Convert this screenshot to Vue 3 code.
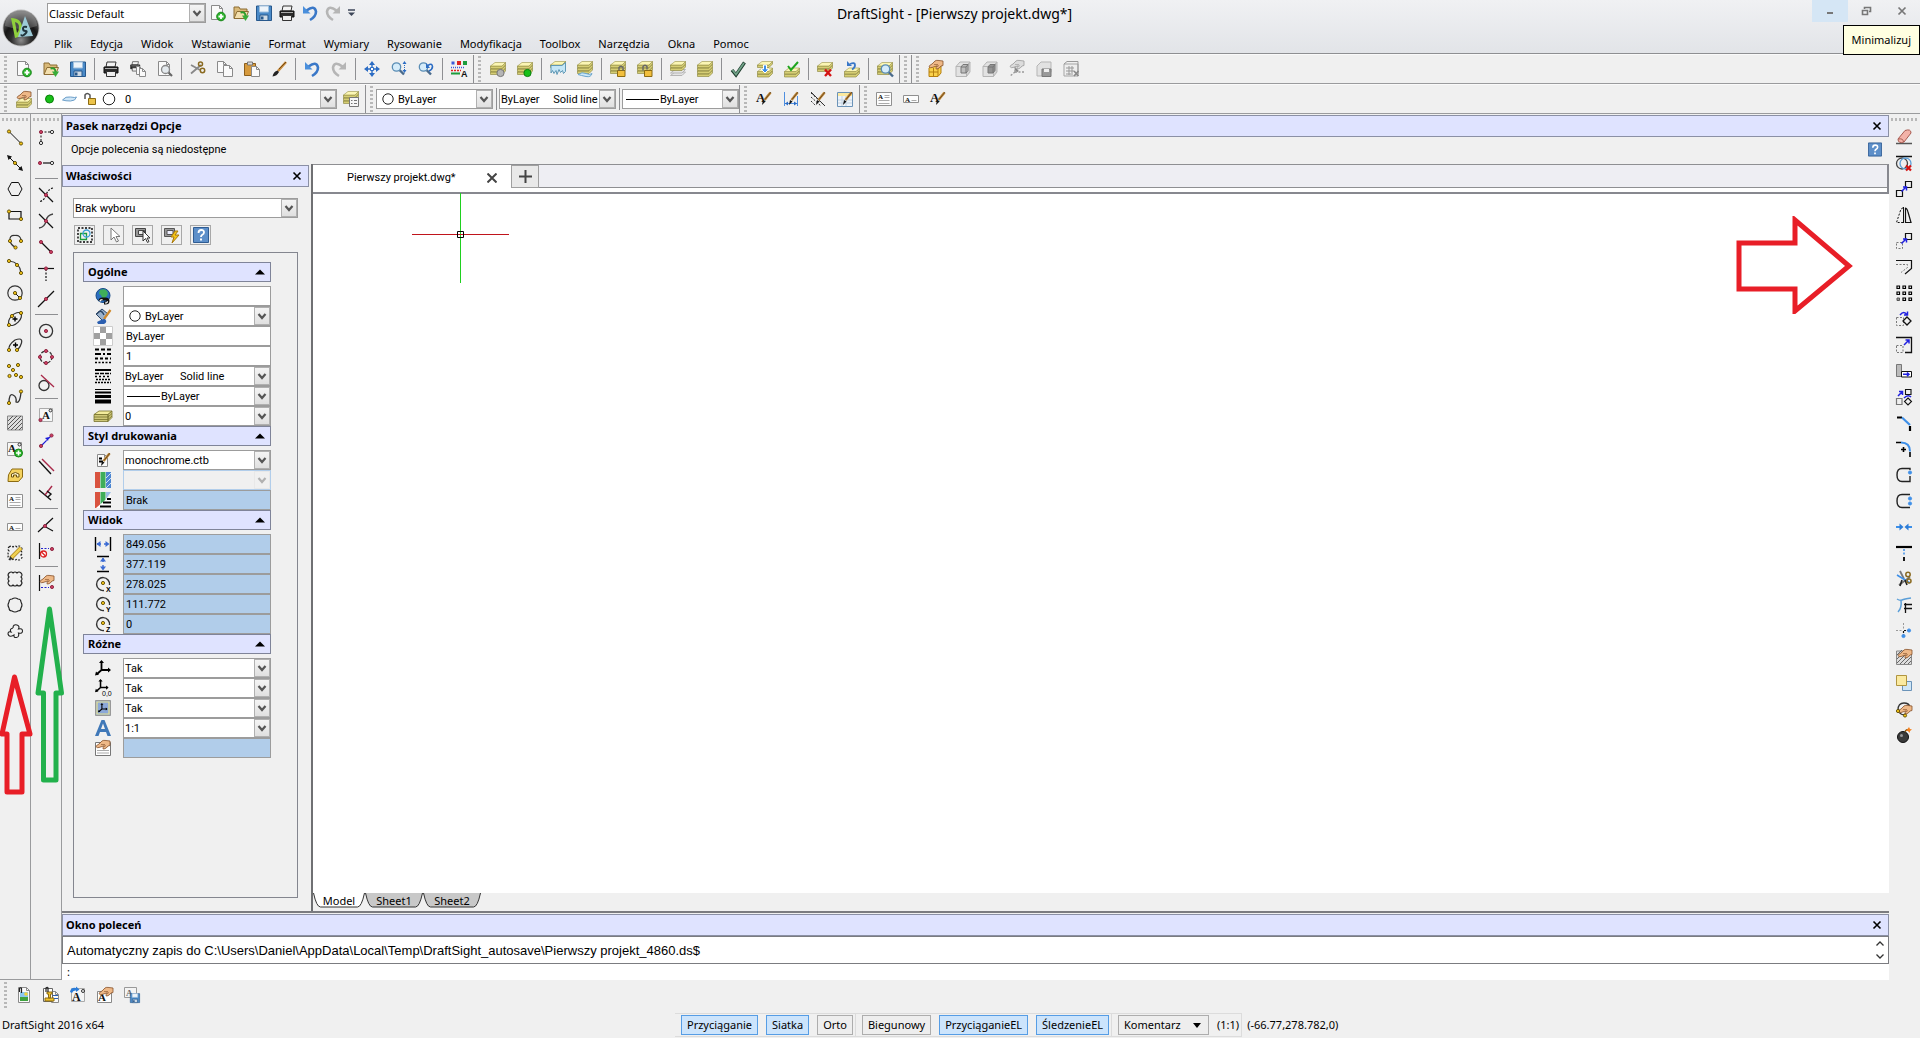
<template>
  <div class="app">
    <!-- title and menu -->
    <header class="top">
      <a class="logo" href="#" aria-label="DraftSight">
        <svg viewBox="0 0 40 40" width="40" height="40">
          <defs>
            <radialGradient id="ball" cx="50%" cy="85%" r="80%">
              <stop offset="0" stop-color="#8d8d8d" />
              <stop offset=".35" stop-color="#2d2d2d" />
              <stop offset=".6" stop-color="#161616" />
              <stop offset="1" stop-color="#777" />
            </radialGradient>
          </defs>
          <circle cx="20" cy="20" r="18.5" fill="#bbb" />
          <circle cx="20" cy="20" r="17.6" fill="url(#ball)" />
          <path d="M4 18a16 16 0 0 1 32 0q-16 6-32 0z" fill="#aaa" opacity=".35" />
          <path d="M10 10q11 0 11 10 0 9-7 10zm4 4 2 11q2-2 2-6t-4-5z" fill="#8fd03c" fill-rule="evenodd" />
          <path d="M24 8l8 20-15 1z" fill="#9ccbd8" />
          <path d="M26 19q-4-1-4 1.5t2.5 2.5-.5 3-4 .5" fill="none" stroke="#20343c" stroke-width="2" />
        </svg>
      </a>
      <div class="top-rows">
        <div class="title-row">
          <div class="combo workspace-combo">
            <select aria-label="Workspace"><option>Classic Default</option></select>
            <span class="drop"><svg viewBox="0 0 10 10" v-html="chevron"></svg></span>
          </div>
          <div class="quick">
            <button v-for="name in quick" :key="name" class="quick-btn" :aria-label="name">
              <svg class="icon" viewBox="0 0 16 16" v-html="icons[name]"></svg>
            </button>
            <button class="more" aria-label="more">
              <svg viewBox="0 0 7 8" width="7" height="8"><path d="M0 1h7" stroke="#3d4658" stroke-width="1.5" /><path d="M0 3.5h7L3.5 7z" fill="#3d4658" /></svg>
            </button>
          </div>
          <h1 class="title">DraftSight - [Pierwszy projekt.dwg*]</h1>
          <div class="window-buttons">
            <button class="hot" aria-label="Minimalizuj"><svg viewBox="0 0 12 12"><path d="M3 8h6" stroke="#777" stroke-width="2" /></svg></button>
            <button aria-label="restore"><svg viewBox="0 0 12 12"><path d="M4.5 4V2.5h6v4H9M2.5 5.5h5v4h-5z" fill="none" stroke="#777" stroke-width="1.6" /></svg></button>
            <button aria-label="close"><svg viewBox="0 0 12 12"><path d="M2.5 2.5l7 7m0-7l-7 7" stroke="#777" stroke-width="1.7" /></svg></button>
            <div class="tooltip">Minimalizuj</div>
          </div>
        </div>
        <nav class="menu">
          <a v-for="item in menu" :key="item" href="#">{{ item }}</a>
        </nav>
      </div>
    </header>

    <!-- standard, layer and view toolbars -->
    <div class="toolbar">
      <div v-for="(group, g) in toolGroups" :key="g" class="tool-group">
        <span class="grip"></span>
        <template v-for="(name, i) in group" :key="i">
          <span v-if="name === '|'" class="sep"></span>
          <button v-else class="tool" :aria-label="name">
            <svg class="icon" viewBox="0 0 16 16" v-html="icons[name]"></svg>
          </button>
        </template>
      </div>
    </div>

    <!-- layer and line properties -->
    <div class="toolbar">
      <div class="tool-group">
        <span class="grip"></span>
        <button class="tool" aria-label="layers"><svg class="icon" viewBox="0 0 16 16" v-html="icons.layerHand"></svg></button>
        <div class="combo layer-combo">
          <svg class="layer-state" viewBox="0 0 66 16" v-html="icons.layerState"></svg>
          <select aria-label="Layer"><option>0</option></select>
          <span class="drop"><svg viewBox="0 0 10 10" v-html="chevron"></svg></span>
        </div>
        <button class="tool" aria-label="layer states"><svg class="icon" viewBox="0 0 16 16" v-html="icons.layerList"></svg></button>
      </div>
      <div class="tool-group line-group">
        <span class="grip"></span>
        <div class="combo line-combo">
          <svg class="lead" viewBox="0 0 16 16"><circle cx="8" cy="8" r="5.2" fill="#fff" stroke="#222" /></svg>
          <select aria-label="Line colour"><option>ByLayer</option></select>
          <span class="drop"><svg viewBox="0 0 10 10" v-html="chevron"></svg></span>
        </div>
        <span class="sep"></span>
        <div class="combo line-combo">
          <select aria-label="Line style"><option>ByLayer &nbsp;&nbsp;&nbsp; Solid line</option></select>
          <span class="drop"><svg viewBox="0 0 10 10" v-html="chevron"></svg></span>
        </div>
        <span class="sep"></span>
        <div class="combo line-combo">
          <svg class="lead-line" viewBox="0 0 34 16"><path d="M1 8.5h33" stroke="#000" /></svg>
          <select aria-label="Line weight"><option>ByLayer</option></select>
          <span class="drop"><svg viewBox="0 0 10 10" v-html="chevron"></svg></span>
        </div>
      </div>
      <div v-for="(group, g) in styleGroups" :key="g" class="tool-group">
        <span class="grip"></span>
        <button v-for="name in group" :key="name" class="tool" :aria-label="name">
          <svg class="icon" viewBox="0 0 16 16" v-html="icons[name]"></svg>
        </button>
      </div>
    </div>

    <div class="workspace">
      <div v-for="(column, c) in leftColumns" :key="c" class="side">
        <span class="side-grip"></span>
        <template v-for="(name, i) in column" :key="i">
          <span v-if="name === '|'" class="side-sep"></span>
          <button v-else class="side-tool" :aria-label="name">
            <svg class="icon" viewBox="0 0 16 16" v-html="icons[name]"></svg>
          </button>
        </template>
      </div>

      <main class="center">
        <section class="options">
          <div class="panel-head">
            <h2>Pasek narzędzi Opcje</h2>
            <button class="close" aria-label="close"><svg viewBox="0 0 10 10" v-html="cross"></svg></button>
          </div>
          <div class="options-body">
            <span>Opcje polecenia są niedostępne</span>
            <button class="help" aria-label="help"><svg viewBox="0 0 16 16" v-html="icons.help"></svg></button>
          </div>
        </section>

        <div class="middle">
          <aside class="properties">
            <div class="panel-head">
              <h2>Właściwości</h2>
              <button class="close" aria-label="close"><svg viewBox="0 0 10 10" v-html="cross"></svg></button>
            </div>
            <div class="properties-body">
              <div class="combo">
                <select aria-label="Selection"><option>Brak wyboru</option></select>
                <span class="drop"><svg viewBox="0 0 10 10" v-html="chevron"></svg></span>
              </div>
              <div class="pickers">
                <button v-for="name in pickers" :key="name" :aria-label="name">
                  <svg class="icon" viewBox="0 0 16 16" v-html="icons[name]"></svg>
                </button>
              </div>
              <div class="sheet">
                <section v-for="section in sections" :key="section.title" class="group">
                  <button class="group-head">
                    <span>{{ section.title }}</span>
                    <svg viewBox="0 0 10 6" width="10" height="6"><path d="M0 5.5L5 .5l5 5z" fill="#000" /></svg>
                  </button>
                  <div class="rows">
                    <div v-for="row in section.rows" :key="row.icon" class="row">
                      <label :for="row.icon" :aria-label="row.icon">
                        <svg class="icon" viewBox="0 0 16 16" v-html="icons[row.icon]"></svg>
                      </label>
                      <div v-if="row.type === 'select'" class="combo" :class="{ off: row.off }">
                        <svg v-if="row.lead === 'circle'" class="lead" viewBox="0 0 16 16"><circle cx="8" cy="8" r="5.2" fill="#fff" stroke="#222" /></svg>
                        <svg v-if="row.lead === 'line'" class="lead-line" viewBox="0 0 34 16"><path d="M1 8.5h33" stroke="#000" /></svg>
                        <select :id="row.icon" :disabled="row.off"><option>{{ row.value }}</option></select>
                        <span class="drop"><svg viewBox="0 0 10 10" v-html="chevron"></svg></span>
                      </div>
                      <input v-else :id="row.icon" type="text" :value="row.value" :readonly="row.type === 'read'" />
                    </div>
                  </div>
                </section>
              </div>
            </div>
          </aside>

          <section class="document">
            <div class="doc-tabs">
              <div class="doc-tab">
                <span>Pierwszy projekt.dwg*</span>
                <button aria-label="close tab"><svg viewBox="0 0 10 10"><path d="M.5 .5l9 9m0-9l-9 9" stroke="#444" stroke-width="2" /></svg></button>
              </div>
              <button class="add-tab" aria-label="new tab"><svg viewBox="0 0 13 13"><path d="M0 6.5h13M6.5 0v13" stroke="#444" stroke-width="2" /></svg></button>
            </div>
            <div class="canvas">
              <svg class="cursor" viewBox="0 0 98 90" width="98" height="90">
                <path d="M48.5 0v90" stroke="#1fd01f" />
                <path d="M0 41.5h97" stroke="#c0141c" />
                <path d="M45.5 38.5h6v6h-6z" fill="none" stroke="#000" />
              </svg>
              <svg class="arrow-right" viewBox="0 0 118 98" width="118" height="98">
                <path d="M4 27h56V4l54 46-54 45V73H4z" fill="none" stroke="#e81e27" stroke-width="5" />
              </svg>
            </div>
            <div class="sheet-tabs">
              <button v-for="tab in sheetTabs" :key="tab.name">
                <svg :viewBox="`0 0 ${tab.width} 15`" :width="tab.width" height="15">
                  <path :d="`M.5 0q3 14 7 14h${tab.width - 15}q4 0 7-14`" :fill="tab.active ? '#fff' : '#c8c8c8'" stroke="#333" />
                </svg>
                <span>{{ tab.name }}</span>
              </button>
            </div>
          </section>
        </div>

        <section class="command">
          <div class="panel-head">
            <h2>Okno poleceń</h2>
            <button class="close" aria-label="close"><svg viewBox="0 0 10 10" v-html="cross"></svg></button>
          </div>
          <div class="history">
            <p>Automatyczny zapis do C:\Users\Daniel\AppData\Local\Temp\DraftSight_autosave\Pierwszy projekt_4860.ds$</p>
            <div class="spin">
              <button aria-label="up"><svg viewBox="0 0 8 5"><path d="M.5 4.5L4 1l3.5 3.5" fill="none" stroke="#333" stroke-width="1.3" /></svg></button>
              <button aria-label="down"><svg viewBox="0 0 8 5"><path d="M.5 .5L4 4 7.5 .5" fill="none" stroke="#333" stroke-width="1.3" /></svg></button>
            </div>
          </div>
          <input class="prompt" type="text" value=":" aria-label="Command" />
        </section>
      </main>

      <div class="side side-right">
        <span class="side-grip"></span>
        <button v-for="name in rightColumn" :key="name" class="side-tool" :aria-label="name">
          <svg class="icon" viewBox="0 0 16 16" v-html="icons[name]"></svg>
        </button>
      </div>

      <svg class="arrows-left" viewBox="0 0 66 190" width="66" height="190">
        <path d="M14.5 73L2 130h5v58h15v-58h8z" fill="none" stroke="#e81e27" stroke-width="5" stroke-linejoin="round" />
        <path d="M49.5 5L38 89h5.5v87H56V89h5.5z" fill="none" stroke="#22b14c" stroke-width="5" stroke-linejoin="round" />
      </svg>
    </div>

    <footer>
      <div class="bottom-tools">
        <span class="grip"></span>
        <button v-for="name in bottomTools" :key="name" class="tool" :aria-label="name">
          <svg class="icon" viewBox="0 0 16 16" v-html="icons[name]"></svg>
        </button>
      </div>
      <div class="status">
        <span class="version">DraftSight 2016 x64</span>
        <div class="modes">
          <div class="mode-group">
            <button class="on">Przyciąganie</button>
            <button class="on">Siatka</button>
            <button>Orto</button>
          </div>
          <div class="mode-group">
            <button>Biegunowy</button>
            <button class="on">PrzyciąganieEL</button>
            <button class="on">ŚledzenieEL</button>
          </div>
          <div class="mode-group">
            <button class="note">Komentarz <svg viewBox="0 0 8 5" width="8" height="5"><path d="M0 0h8L4 5z" fill="#000" /></svg></button>
            <span>(1:1)</span>
          </div>
          <span class="coords">(-66.77,278.782,0)</span>
        </div>
      </div>
    </footer>
  </div>
</template>

<script setup>
// drawing helpers
const ln = (d, c = '#111', w = 1, more = '') => `<path d="${d}" fill="none" stroke="${c}" stroke-width="${w}" ${more}/>`
const fl = (d, f, s = 'none', w = 1) => `<path d="${d}" fill="${f}" stroke="${s}" stroke-width="${w}"/>`
const dots = (pts, f = '#f5c518', s = '#5b4a00') => pts.map(([x, y]) => `<circle cx="${x}" cy="${y}" r="1.6" fill="${f}" stroke="${s}" stroke-width=".9"/>`).join('')
const red = (...pts) => dots(pts, '#cc3f62', '#8c2440')
const blue = (...pts) => dots(pts, '#3d8fe8', '#3d8fe8')
const dash = 'stroke-dasharray="2 1.5"'
const letter = (t, x, y, size, c = '#111', family = 'Liberation Serif') =>
  `<text x="${x}" y="${y}" font-size="${size}" font-weight="bold" font-family="${family}, serif" fill="${c}">${t}</text>`

// one slab: pale top face over a front edge
const slab = (y) => fl(`M.5 ${y + 4}h11.5l3.5-3.5v2.5l-3.5 3.500H.5z`, '#d6ce74', '#857f36', 0.6) + fl(`M.5 ${y + 4}l4.500-3.500h10.500l-3.500 3.500z`, '#fbf6b4', '#9a9448', 0.6)
const slabGrey = (y) => fl(`M.5 ${y + 4}l4.500-3.500h10.500l-3.500 3.500z`, '#e4e4e4', '#b5b5b5')
const stack = (n, y = 1) => Array.from({ length: n }, (_, i) => slab(y + (n - 1 - i) * 3)).join('')
const badge = (c, s) => `<circle cx="10.5" cy="12" r="3.6" fill="${c}" stroke="${s}"/>`
const lock = fl('M7.500 9.500h7.500v6h-7.500z', '#f2bf3d', '#8c6b12')
const page = (x, y, w = 8, h = 10) => fl(`M${x} ${y}h${w - 3}l3 3v${h - 3}h-${w}z`, '#fafafa', '#8a8a8a') + ln(`M${x + w - 3} ${y}v3h3`, '#8a8a8a')
const lens = (x, y) => ln(`M${x + 3} ${y + 3}l4.500 4.500`, '#4a6b8c', 2.4) + `<circle cx="${x}" cy="${y}" r="4.2" fill="#d5ecfa" stroke="#5a8db5" stroke-width="1.3"/>`
const hand = (x = 0, y = 0, f = '#eeb887', s = '#86502a') => `<g transform="translate(${x} ${y})">` +
  fl('M1 6.500Q1 5.500 4 4l3-3q1-.8 3-.6l5 .6v4.500l-2 .5q-1.500 2.500-4 3-1.500.2-1-1.200l1.200-2L4 7.500q-2 .8-3-1z', f, s, 0.8) + ln('M6 4.500h4M9 6.500l2-1', s, 0.6) + '</g>'
const brushAt = ln('M14.500 1.500L8.500 9', '#c08a3c', 2.6) + ln('M15 1L9 8.500', '#5b3a12', 0.8) + fl('M6 14l1-5 2.500 1.500z', '#111')
const note = fl('M.5 1.500h15v13H.5z', '#fdfdfd', '#909090') + letter('A', 2, 8, 7) + ln('M8.500 4.500h5M8.500 6.500h5M2.500 9.500h11M2.500 12.500h11', '#aaa')
const smallNote = fl('M.5 4.500h15v7H.5z', '#fdfdfd', '#909090') + letter('A', 2, 10.5, 7) + ln('M8.500 9.500h5', '#aaa')
const printer = fl('M4 1h9l-1 5H3z', '#f2f2f2', '#333') + fl('M1 6h14v6H1z', '#2a2a2a', '#111') + fl('M3.500 10.500h9v5h-9z', '#eee', '#333') + ln('M2 7.500h12', '#aaa')
const floppy = fl('M.5 1h15v14.500h-15z', '#4a8ac8', '#27588c') + fl('M3.500 1h9v6h-9z', '#eef4fa', '#9fc0de') + fl('M4 10h8v5.500H4z', '#cfdbe6', '#27588c') + fl('M5 11.500h2.500v3H5z', '#27588c')
const cube = (inner) => fl('M1 5.500l4-4.500h10l-3.500 4.500zM1 5.500h10.500v10H1z', '#e2e2e2', '#b5b5b5') + fl('M11.500 5.500L15 1v10l-3.500 4.500z', '#d2d2d2', '#b5b5b5') + fl('M6 6l2-2.500h5v6L11 12H6z', inner, '#777') + ln('M6 6h5v6M11 6l2-2.500', '#777')
const arrow = (d) => ln(d, '#2020e0', 1.5)
const stripes = (c) => ln('M1 6l5-5M1 10l9-9M1 14l13-13M4 15L15 4M8 15l7-7M12 15l3-3', c)
const axes = ln('M6.500 10V1.500M6.500 10H15M6.500 10L1.500 14.500', '#000', 1.8) + fl('M6.500 0l2.500 3H4zM16 10l-3 2.500v-5zM0 15.500l1-4 3 3z', '#000')
const centreOf = (t) => ln('M14.500 9A6.500 6.500 0 1 0 9 14.500', '#333', 1.4) + dots([[8, 7]]) + `<text x="11" y="16" font-size="7" font-weight="bold" font-family="Liberation Sans, sans-serif">${t}</text>`

const chevron = '<path d="M1.5 3l3.5 4 3.5-4" fill="none" stroke="#555" stroke-width="2.2"/>'
const cross = '<path d="M1.5 1.5l7 7m0-7l-7 7" fill="none" stroke="#000" stroke-width="1.6"/>'

const icons = {
  newDoc: page(1.5, 0.5, 11, 14) + '<circle cx="11" cy="11.5" r="4.3" fill="#2fb52f" stroke="#158515"/>' + ln('M11 9v5M8.500 11.500h5', '#fff', 1.8),
  open: fl('M1 13V2h5l1 2h7v3z', '#d9b978', '#8c6c33') + fl('M1 13.500L4 6.500h11.500l-3 7z', '#f3dfae', '#8c6c33') + ln('M7.500 7.500q5-1.500 5 4', '#2d9d2d', 2) + fl('M9 10.500h7L12.500 16z', '#39ad39'),
  save: floppy,
  print: printer,
  undo: ln('M4.500 5.500q8-6 9.500 1 0 5-6 8.500', '#3a78c8', 2.6) + fl('M1 1v7.500h7.500z', '#4a8fdc'),
  redo: ln('M11.500 5.500q-8-6-9.500 1 0 5 6 8.500', '#b5b5b5', 2.6) + fl('M15 1v7.500H7.500z', '#b5b5b5'),
  printMany: '<g transform="scale(.65)">' + printer + '</g>' + page(6.5, 5.5, 6, 8) + page(9.5, 7.5, 6, 8),
  preview: page(1.5, 0.5, 11, 14) + ln('M11 11l4 4', '#666', 2.2) + '<circle cx="8.5" cy="8.5" r="4" fill="#e4eaee" stroke="#888" stroke-width="1.3"/>',
  cut: ln('M1 4l9 5M1 12.500L11 4', '#888', 1.8) + '<circle cx="10.5" cy="3" r="2" fill="none" stroke="#8a6a20" stroke-width="1.5"/><circle cx="12.5" cy="9.5" r="2.2" fill="none" stroke="#8a6a20" stroke-width="1.5"/>',
  copy: page(0.5, 0.5, 9, 11) + page(6.5, 4.5, 9, 11),
  paste: fl('M.5 2.500h11v12H.5z', '#d69a3d', '#8c5f1c') + fl('M3.500 1h5v3h-5z', '#ddd', '#777') + page(7.5, 5.5, 8, 10),
  brush: ln('M15 1L7 10', '#c98b39', 2.6) + ln('M15 1L8 8', '#5b3a12', 0.8) + fl('M1.500 15.500q1-5 5-6l1.500 1.500q-2 4-6.500 4.500z', '#222'),
  pan: ln('M8 3v10M3 8h10', '#2b6cc4', 1.4, 'stroke-dasharray="3 4"') + fl('M8 0l3 4H5zM8 16l3-4H5zM0 8l4-3v6zM16 8l-4-3v6z', '#2b6cc4') + fl('M6.500 6.500h3v3h-3z', '#fff', '#2b6cc4'),
  zoomDyn: lens(5.5, 6) + ln('M13.500 2v8', '#2b6cc4', 1, 'stroke-dasharray="1 1"') + fl('M13.500 0l2 3h-4zM13.500 12l2-3h-4z', '#2b6cc4'),
  zoomPrev: lens(5.5, 6) + ln('M10 4.500q4-3 4.500 1 0 3-3.500 4.500', '#2b6cc4', 1.6) + fl('M8 2v5h4z', '#2b6cc4'),
  palette: fl('M.5 .5h3v3h-3z', '#3b59d9') + fl('M6 0h4v4H6z', '#d22') + fl('M12 0h4v4h-4z', '#1c9c3c') + ln('M0 6.500h14', '#3b59d9', 1.5, 'stroke-dasharray="1 1"') + ln('M0 9.500h10', '#d22', 1.5, 'stroke-dasharray="2 1"') + ln('M0 12.500h9', '#1c9c3c', 2) + letter('A', 10, 16, 9, '#111', 'Liberation Sans'),
  layerOff: stack(3, 1) + badge('#b5b5b5', '#777'),
  layerOn: stack(3, 1) + badge('#18c018', '#0b800b'),
  layerThaw: slab(0) + fl('M1 4.500h11l3.500-3v9l-2 2-1-3-2 2-1.500-3-2 5-1-4-2 3-1.500-3L1 12z', '#c4e6f6', '#5f98b5'),
  layerFreeze: stack(3, 0) + fl('M1 13.500q4-3 8-1t6 0q-1 4-6 3t-8-2z', '#c9e8fa', '#6ca6cc'),
  layerLock: stack(3, 0) + lock + ln('M9 9.500V6.500q2-2.500 4 0v3', '#666', 1.4),
  layerUnlock: stack(3, 0) + lock + ln('M6 9.500V5.500q2-2.500 4 0v3', '#666', 1.4),
  layerHide: slabGrey(10.5) + slabGrey(8) + stack(2, 0),
  layerShow: stack(2, 6) + stack(2, 0),
  check: ln('M2 9l4 5L14.500 1.500', '#1f3d2f', 3.4) + ln('M2.500 9l3.500 4.500L14 2', '#71a388', 1.8),
  layerMerge: stack(2, 6.5) + slab(0) + fl('M6.500 4h3v4h2.500L8 12 4 8h2.500z', '#3d8fe8', '#fff'),
  layerCheck: stack(2, 6.5) + ln('M4 5l3 4 7-8', '#1ea51e', 2),
  layerDelete: stack(2, 1) + ln('M8 8.500l6 6.500m0-6.500L8 15', '#d41414', 2.4),
  layerUndo: stack(2, 6.5) + ln('M6 3q5-2 5 1 0 3-3 4.500', '#3a78c8', 1.8) + fl('M3 0v5h5z', '#3a78c8'),
  layerZoom: stack(3, 1) + lens(8.5, 8),
  cubeHand: fl('M1 7l3-3h9v8l-3 3.500H1z', '#fad14a', '#b57f10') + ln('M1 11h9M5.500 7v8M10 7v8', '#b57f10') + hand(0, -1),
  cubeA: cube('#bdbdbd'),
  cubeB: cube('#939393'),
  axisGrey: ln('M6 11V4M6 11h9M6 11l-5 4', '#999', 1.4, dash) + hand(0, -1, '#dcdcdc', '#999') + ln('M6 7.500l3 3', '#888', 2),
  cubeSave: fl('M1 5l4-4h10v10l-3 4H1z', '#e2e2e2', '#b5b5b5') + fl('M6 8h9v7.500H6z', '#999', '#777') + fl('M8 8h5v3H8z', '#eee'),
  cubeX: fl('M1 3h14v12H1z', '#eee', '#a5a5a5') + ln('M3 7h8M3 10h8M3 13h5M6 5v9M9 5v9M1 3l3-2.500h11V13', '#999') + ln('M11 10l4.500 5m0-5L11 15', '#888', 1.6),
  layerHand: stack(2, 7) + hand(0, 0),
  layerList: stack(3, 0) + fl('M6.500 6.500h9v9h-9z', '#f6f6f6', '#777') + ln('M8 9.500h1.500M11 9.500h3M8 12.500h1.500M11 12.500h3', '#777'),
  layerState: '<circle cx="6.5" cy="8" r="4" fill="#18c018" stroke="#0b800b"/>' + fl('M19.500 9q3-4 8-3t6 0q-1 4-6 4t-8-1z', '#cfe6f7', '#6d9fc9') + fl('M45.500 7.500h7v6h-7z', '#ecc34a', '#8c6b12') + ln('M42 8V4q2-3 5 0v3', '#555', 1.5) + '<circle cx="66" cy="8" r="5.8" fill="#fff" stroke="#222"/>',
  textStyle: letter('A', 0, 11, 13) + brushAt,
  dimStyle: ln('M1.500 1v14M14.500 5v10M2 12.500h12', '#4f8fe0') + fl('M2 12.500l3-2v4zM14 12.500l-3-2v4z', '#2b6cc4') + brushAt,
  multiStyle: ln('M1 2l13 12M1 6l10 9M1 10l5 5', '#333', 1, dash) + ln('M1 1l14 14', '#333') + brushAt,
  tableStyle: fl('M.5 1.500h15v14H.5z', '#eef4fa', '#6b93b8') + fl('M1 2h14v3H1z', '#fbe9a0') + ln('M5 5v10M9 5v10M1 9h14M1 12h14', '#c3d3e2') + brushAt,
  note,
  smallNote,
  noteBrush: letter('A', 0, 11, 13) + brushAt,

  line: ln('M2 2.500l12 12') + dots([[2, 2.5], [14, 14.5]]),
  ray: ln('M1 1l14 14') + fl('M0 0l5 1.500L1.500 5zM16 16l-5-1.500 3.500-3.500z', '#111') + dots([[8, 8]]),
  hexagon: ln('M4.500 1.500h7L15 8l-3.500 6.500h-7L1 8z'),
  rect: ln('M2 4.500h12v7.500H2z', '#111', 1.2) + dots([[2, 4.5], [14, 12]]),
  arc3: ln('M3 8Q2 2 8 2.500q6-.5 6 5.500M3 8q1 4 5 6', '#333', 1.2) + dots([[3, 8], [14, 8], [8.5, 14.5]]),
  arc: ln('M2 2q11 1 12 12', '#333', 1.2) + dots([[2, 2], [10, 6], [14, 14]]),
  circle: '<circle cx="8" cy="8" r="7.2" fill="none" stroke="#333" stroke-width="1.2"/>' + ln('M8 8l5 5') + dots([[8, 8], [13, 13]]),
  ellipse: '<ellipse cx="8" cy="8" rx="8" ry="4.5" transform="rotate(-45 8 8)" fill="none" stroke="#333" stroke-width="1.2"/>' + ln('M8 5.500v5M5.500 8h5', '#000', 1.4) + dots([[14, 2], [2, 14], [5, 5]]),
  ellArc: ln('M2 13Q1 8 8 3q8-3 6.500 3-1 4-4 7', '#333', 1.2) + ln('M8.500 5.500v5M6 8h5', '#000', 1.4) + dots([[2, 13], [10, 13]]),
  points: dots([[2, 3], [11, 2], [6, 7], [2.5, 13], [9, 12], [14, 14]]),
  spline: ln('M2 14Q2 4 6 6t3 7q4 2 5-10', '#333', 1.3) + dots([[2, 14], [14, 2.5]]),
  hatch: fl('M.5 1h15v14H.5z', '#ddd', '#888') + stripes('#555'),
  textAdd: fl('M.5 1.500h14v13H.5z', '#f6f6f6', '#999') + letter('A', 1, 11, 11) + '<circle cx="12.5" cy="3.5" r="1.5" fill="none" stroke="#333"/><circle cx="11.5" cy="12" r="4" fill="#2fb52f" stroke="#158515"/>' + ln('M11.500 9.500v5M9 12h5', '#fff', 1.6),
  region: fl('M5 2h10.500v8l-4 4.500H1q-1-7 4-12.500z', '#f4d25f', '#8c6b12') + fl('M4.500 10V7q4-3 7.500 0v3h-2.500v-2h-3v2z', '#fff6cc', '#6b5210'),
  cloudEdit: ln('M2 2q2.500-2 4 0 2-2 4 0 2-2 4 0 2 2 0 4 2 2 0 4 2 2 0 4-2 2-4 0-2 2-4 0-2 2-4 0-2-2 0-4-2-2 0-4-2-2 0-4', '#222', 1.2, dash) + ln('M14 3L4 13', '#a8801a', 4) + ln('M14 3L4 13', '#f0d050', 2.6) + fl('M2 15l1-4 3 3z', '#333'),
  cloudRect: ln('M2 2q2.500-2 4 0 2-2 4 0 2-2 4 0 2 2 0 4 2 2 0 4 2 2 0 4-2 2-4 0-2 2-4 0-2 2-4 0-2-2 0-4-2-2 0-4-2-2 0-4', '#222', 1.1),
  cloudRound: ln('M5 2q3-2 6 0 3 0 3 3 2 3 0 6 0 3-3 3-3 2-6 0-3 0-3-3-2-3 0-6 0-3 3-3', '#222', 1.1),
  cloudFree: ln('M6 5q0-4 4-3 3 1 1.500 4 4-1 4 2t-4 2q1 4-2 4.500T7 12q-5 3-6-1 0-3 3-2-2-3 2-4', '#222', 1.1),

  snapCorner: ln('M3 3h10M3 3v11', '#111', 1, dash) + red([3, 3]) + dots([[14, 3], [3, 14]], '#fff', '#111'),
  snapSegment: ln('M5 8h7', '#111', 1.2) + red([2, 8]) + dots([[14, 8]], '#fff', '#111'),
  snapNone: ln('M1 1l14 14', '#111', 1.2) + ln('M15 1q-5 1-7 7-1 5-7 7', '#111', 1.2, dash) + red([8, 8]),
  snapCross: ln('M1 1l14 14', '#111', 1.2) + ln('M15 1Q9 2 8 8q-1 6-7 7', '#444', 1.4) + red([8, 8]),
  snapEnd: ln('M3 3l10 10', '#111', 1.2) + red([3, 3], [13, 13]),
  snapPerpMid: ln('M0 3.500h16', '#111', 1.2) + ln('M8 4v12', '#111', 1.2, dash) + red([8, 3.5]),
  snapMid: ln('M0 16L16 0', '#111', 1.2) + red([8, 8]),
  snapCentre: '<circle cx="8" cy="8" r="6.6" fill="none" stroke="#333" stroke-width="1.3"/>' + red([8, 8]),
  snapQuad: '<circle cx="8" cy="8" r="6" fill="none" stroke="#333" stroke-width="1.3" stroke-dasharray="3 1.5"/>' + red([8, 2], [14, 8], [8, 14], [2, 8]),
  snapTangent: '<circle cx="6" cy="10.5" r="5" fill="none" stroke="#333" stroke-width="1.3"/>' + ln('M3 0l13 12', '#a82848', 1.3),
  snapInsert: fl('M1.500 1.500h13v13h-13z', '#f6f6f6', '#aaa') + letter('A', 4, 12, 11) + '<circle cx="12.5" cy="3.5" r="1.4" fill="none" stroke="#333"/>' + red([2.5, 13]),
  snapNode: ln('M3 13L13 3', '#1c1cd8', 1.2, 'stroke-dasharray="8 2"') + fl('M7 5l4-1-1 4z', '#1c1cd8') + red([3, 13], [13.5, 2.5]),
  snapParallel: ln('M1 2l12 13', '#111', 1.4) + ln('M4 0l12 12', '#a82848', 1.4),
  snapPerp: ln('M1 5l12 10', '#111', 1.5) + ln('M14 1L7 10', '#a82848', 1.4) + ln('M9 6l4 3-3 3', '#111', 1.4),
  snapNear: ln('M0 15L15 1M6 9l9 5', '#111', 1.2) + red([7, 9]),
  snapOff: ln('M1.500 0v16', '#111', 1.2) + ln('M3 5.500h8', '#22c', 1, dash) + red([14, 6]) + '<circle cx="5.5" cy="11" r="3" fill="#fff" stroke="#d22" stroke-width="1.3"/>' + ln('M3.500 9l4 4', '#d22', 1.2),
  snapHand: ln('M1.500 0v16', '#111', 1.2) + ln('M3 12.500h8', '#22c', 1, dash) + red([14, 12]) + hand(1, 0),

  eraser: ln('M0 14.500h16', '#555', 1.5) + fl('M9 1.500q6-2 6 2.500L8 13q-6 2-6-3z', '#f3b2a8', '#a85a50') + ln('M2.500 10q4-1 5.500 3', '#a85a50'),
  dedupe: ln('M0 1.500h16', '#111', 1.5) + '<circle cx="6" cy="8.5" r="5.5" fill="none" stroke="#444" stroke-width="1.3"/><circle cx="9.5" cy="8.5" r="5.5" fill="none" stroke="#5c9fd8" stroke-width="1.3"/>' + ln('M10 10.500l5 5m0-5l-5 5', '#d41414', 2.2),
  copyEnt: ln('M.5 9.500h6v6h-6zM9.500 .5h6v6h-6z', '#111', 1.2) + arrow('M5.500 10.500l5-5M7 6h3.500v3.500'),
  mirror: ln('M7 1Q5 1 4 5L.5 15.500H7', '#111', 1, dash) + ln('M7.500 0v16', '#111') + ln('M9 1q2 0 3 4l3 10.500H9.500V1', '#111', 1.2),
  move: ln('M.5 9.500h6v6h-6z', '#777', 1, dash) + ln('M9.500 .5h6v6h-6z', '#111', 1.2) + arrow('M5.500 10.500l5-5M7 6h3.500v3.500'),
  offset: ln('M0 1.500h15.500v8L9 15', '#111', 1.2) + ln('M0 5.500h11.500v3L5 13.500', '#777', 1, dash),
  pattern: ln('M1 1h2.500v2.500H1zM7 1h2.500v2.500H7zM13 1h2.500v2.500H13zM1 7h2.500v2.500H1zM7 7h2.500v2.500H7zM13 7h2.500v2.500H13zM7 13h2.500v2.500H7zM13 13h2.500v2.500H13z', '#000', 1.2) + fl('M1 13h2.500v2.500H1z', '#999', '#555'),
  rotate: ln('M.5 6.500h7v8h-7z', '#777', 1, dash) + ln('M11 6l4 4-4 4-4-4z', '#111', 1.3) + arrow('M4 4q4-5 7 0M8 4h3.500V.5'),
  scale: ln('M0 .5h15.500V15.500H9', '#111', 1.3) + ln('M.5 8.500h6.500v7H.5z', '#777', 1, dash) + arrow('M8 8l5-5M9.500 3H13v3.500'),
  stretch: fl('M.5 1.500h5v12h-5z', '#bbb', '#777') + fl('M5.500 8.500h10v5.500h-10z', '#fff', '#111') + arrow('M7 11.300h6M11 9.500l2 1.800-2 1.800'),
  transform: ln('M.5 9.500h5.500v6H.5z', '#777', 1.2) + ln('M9.500 .5h5.500v5H9.500zM12 9l3.500 3.500L12 16l-3.500-3.500z', '#111', 1.1) + arrow('M2 7l4.500-4.500M3 2.500h3.500V6M8 9q4-4 7-1'),
  chamfer: ln('M1 2.500h5M14 11v5', '#000', 2.2) + ln('M6 2.500L14 10', '#3d8fe8', 2.2),
  fillet: ln('M0 1.500h5M14 11v5M7.500 6v5M5 8.500h5', '#000', 1.6) + ln('M5 1.500q9 0 9 9', '#3d8fe8', 2),
  breakOne: ln('M14 3V1.500H6Q1 1.500 1 8t5 6.500h8V9', '#222', 1.4) + blue([14, 5.5]),
  breakTwo: ln('M14 1.500H6Q1 1.500 1 8t5 6.500h8', '#222', 1.4) + blue([14, 5.5], [14, 10.5]),
  weld: ln('M0 8h6M10 8h6', '#3d8fe8', 1.8) + fl('M3.500 4.500L7.500 8l-4 3.500zM12.500 4.500L8.500 8l4 3.500z', '#2b7cd8'),
  extend: ln('M0 2h16', '#000', 2.2) + ln('M8 4v7', '#3d8fe8', 1.5, dash) + ln('M8 12v4', '#000', 1.8),
  trim: ln('M4 0l4 8M3 14L14 6', '#777', 1.8) + ln('M1 4l13 8', '#3d8fe8', 1.5) + ln('M6 9l-2 6M9 9l2 5', '#222', 1.6) + '<circle cx="12" cy="3.5" r="2.2" fill="none" stroke="#8a6a20" stroke-width="1.5"/><circle cx="13" cy="10" r="2" fill="none" stroke="#8a6a20" stroke-width="1.5"/>',
  powerTrim: ln('M1 2q3 2 5 1t9-2M2 15q4-4 3-12', '#5c9fd8', 1.5) + ln('M8 7.500h8M8 11.500h8M9.500 6v10', '#111', 1.3),
  splitPoint: ln('M7.500 0v7M0 7.500h7', '#999', 1, dash) + ln('M8 7.500h7M7.500 8v7', '#111', 1.2, dash) + blue([7.5, 13], [13, 7.5]),
  hatchEdit: fl('M.5 2h15v13.500H.5z', '#ddd', '#888') + stripes('#666') + hand(1, 0),
  order: fl('M6.500 6.500h9v9h-9z', '#cfe6f7', '#6b93b8') + fl('M.5 .5h10v10H.5z', '#fbeaa0', '#b09540'),
  pedit: ln('M2 9q0-7 6-7 5 0 6 4M3 11q2 3 6 3', '#333', 1.3) + hand(1, 4) + dots([[2, 10], [9, 14.5]]),
  explode: '<circle cx="7" cy="10" r="5.5" fill="#3a3a3a" stroke="#111"/><circle cx="5.5" cy="8.5" r="1.5" fill="#999"/>' + ln('M9 5q1-3 4-2', '#7a5a20', 1.5) + fl('M13 0l1 2 2 .5-2 1.500-.5 2-1.500-2-2 0 1.500-2z', '#f5821f'),

  help: fl('M.5 .5h15v15H.5z', '#5d8fc9', '#2f5c93') + ln('M5.500 6q0-3 2.800-3t2.700 2.500q0 1.500-2 2.500-1 .7-1 2', '#fff', 1.8) + fl('M7 11.500h2v2H7z', '#fff'),
  selectArea: ln('M1 1h14v14H1z', '#000', 1.4, dash) + ln('M3.500 6.500h6v6h-6z', '#1c9c3c', 1.3) + '<circle cx="9.5" cy="6.5" r="3.5" fill="none" stroke="#3d9fd8" stroke-width="1.3"/>',
  pointer: fl('M5 1v12l3-3 2.500 5 2-1-2.500-4.500h4z', '#fff', '#777'),
  pickMatch: fl('M.5 1.500h10v8H.5z', '#999', '#444') + fl('M3.500 3.500h6v4h-6z', '#eee', '#444') + fl('M8 4v10l2.500-2.500 2 4 1.500-1-2-3.500h3z', '#fff', '#333'),
  pickQuick: fl('M.5 1.500h10v8H.5z', '#999', '#555') + fl('M3 3.500h6v4H3z', '#eef', '#555') + fl('M11 4l-4 6h3l-2 6 7-8h-4l3-4z', '#f5c518', '#a8780c'),

  hyperlink: '<circle cx="8" cy="7.5" r="7" fill="#2b6fc0" stroke="#174a86"/>' + fl('M5 2q5-2 7 1t-1 6-4 0-3-3z', '#3fae5a') + ln('M5 13q0-2 2.500-2h1M9 15h1.500q2.500 0 2.500-2t-2.500-2H8', '#111', 3) + ln('M5 13.500q0-1.800 2.500-1.800M10 15q2.500 0 2.500-1.800', '#fff', 1.2),
  lineColor: fl('M1 6l6-5 6 5-5 7z', '#9cb3cc', '#2b4666') + ln('M2 6q4-6 7 1', '#2b4666', 1.3) + ln('M15.500 2L9 11', '#d08a2c', 2.2) + fl('M2 14q5-3 8-3 3 3-1 5H3z', '#2b5fb0'),
  transparency: fl('M-1.500 -1.500h19v19H-1.500z', '#fff', '#ccc') + fl('M5 -1h6v6H5zM-1 5h6v6H-1zM11 5h6v6h-6zM5 11h6v6H5z', '#a0a0a0'),
  lineScale: ln('M0 1.500h16', '#000', 2, 'stroke-dasharray="4 2"') + ln('M0 6h16', '#000', 2, 'stroke-dasharray="6 2 2 2"') + ln('M0 10.500h16', '#000', 2, 'stroke-dasharray="3 2"') + ln('M0 14.500h16', '#000', 1.6, 'stroke-dasharray="2 1.5"'),
  lineStyle: ln('M0 2h16', '#000', 2) + ln('M0 5.500h16', '#000', 1.5, 'stroke-dasharray="4 1"') + ln('M0 8.500h16', '#000', 1.5, 'stroke-dasharray="2 2"') + ln('M1 11.500h15M0 14.500h16', '#000', 1.5, 'stroke-dasharray="2 1"'),
  lineWeight: ln('M0 1.500h16', '#000', 1) + ln('M0 4.500h16', '#000', 2) + ln('M0 8.500h16', '#000', 3) + ln('M0 13.500h16', '#000', 4),
  layer: fl('M-1 6.500L4 3h13l-4 3.500z', '#f3ec9c', '#77722d', 0.8) + fl('M-1 6.500h14v7H-1zM13 6.500L17 3v6.500l-4 4z', '#cfc878', '#77722d', 0.8) + ln('M-1 9h14l4-3.500M-1 11.500h14l4-3.500', '#77722d', 0.8),
  plotStyle: page(2.5, 2.5, 10, 12) + ln('M4 6.500h3M4 9.500h4', '#000', 2) + brushAt,
  plotTable: fl('M0 0h5v16H0z', '#d9533f') + fl('M5.500 0h5v16h-5z', '#3fae5a') + fl('M11 0h5v16h-5z', '#4d86d0') + ln('M11 6l5-5M11 11l5-5M11 16l5-5', '#cfe0f5'),
  plotNone: fl('M0 0h5v16H0z', '#d9533f') + fl('M5.500 0h5v8l-5 6z', '#3fae5a') + fl('M11 0h5l-5 7z', '#9bbce6') + fl('M1 16L16 3v13z', '#fff') + ln('M12 7h4M8 10.500h8M5 14.500h11', '#000', 2),
  width: ln('M.5 1v14M15.500 1v14', '#000', 1.4) + ln('M2 8h12', '#3a6ad4', 1.4, 'stroke-dasharray="4 3"') + fl('M1.500 8l4-3v6zM14.500 8l-4-3v6z', '#3a6ad4'),
  height: ln('M2 .5h12M2 15.500h12', '#000', 1.4) + ln('M8 2v12', '#3a6ad4', 1.4, 'stroke-dasharray="4 3"') + fl('M8 1.500l3 4H5zM8 14.500l3-4H5z', '#3a6ad4'),
  centreX: centreOf('X'),
  centreY: centreOf('Y'),
  centreZ: centreOf('Z'),
  ucs: axes,
  ucsOrigin: '<g transform="translate(0 -1) scale(.85)">' + axes + '</g><text x="7" y="16" font-size="7" font-family="Liberation Sans, sans-serif">0,0</text>',
  ucsView: fl('M.5 .5h15v15H.5z', '#8ba8d8', '#999') + ln('M2 2h12v12H2z', '#e8e08c', 1.2) + '<g transform="translate(3 3) scale(.6)">' + axes + '</g>',
  annotation: fl('M0 16L6.500 0h3L16 16h-3.500l-1.500-4H5l-1.500 4zM6 9h4L8 3.500z', '#3f78b8'),
  noteHand: fl('M.5 2.500h15v13H.5z', '#fff', '#777') + ln('M2 10.500h12M2 13h12', '#aaa') + hand(0, 0),

  image: page(2.5, 0.5, 11, 15) + fl('M4 5h8v5H4z', '#8cc8ee') + fl('M4 10h8v4H4z', '#3fa33f') + '<circle cx="10" cy="7" r="1.8" fill="#f5d33a"/>' + ln('M3.500 5V1.500q1.500-1.500 2 0V6', '#222', 1.2),
  reference: page(8.5, 4.5, 7, 11) + fl('M.5 1.500h9v13h-9z', '#fff', '#666') + fl('M2 11h9v3H2zM4 5h5v2H7.500v4h-2V7H4z', '#f2c52d', '#8c6b12') + ln('M3 5V1q1.500-1.500 2 0v4', '#222', 1.2) + ln('M10 8.500h5M11 11.500h4', '#2b5fb0', 1.2),
  attribute: fl('M1.500 1.500h13v13h-13z', '#f4f4f4', '#aaa') + letter('A', 2, 14, 12) + fl('M0 5q1-5 6-4V-.5L9.500 2.500 6 5V3.500Q3 3 2 6z', '#2b7cd8') + '<circle cx="13" cy="4" r="1.5" fill="none" stroke="#333"/>',
  attrHand: fl('M.5 4.500h14v11H.5z', '#fff', '#888') + letter('A', 1, 14, 11) + hand(1, 0),
  attrSave: fl('M.5 .5h12v10H.5z', '#f4f4f4', '#999') + letter('A', 2, 9, 9, '#666') + '<g transform="translate(6 6) scale(.62)">' + floppy + '</g>',
}

const quick = ['newDoc', 'open', 'save', 'print', 'undo', 'redo']
const menu = ['Plik', 'Edycja', 'Widok', 'Wstawianie', 'Format', 'Wymiary', 'Rysowanie', 'Modyfikacja', 'Toolbox', 'Narzędzia', 'Okna', 'Pomoc']

const toolGroups = [
  ['newDoc', 'open', 'save', '|', 'print', 'printMany', 'preview', '|', 'cut', 'copy', 'paste', 'brush', '|', 'undo', 'redo', '|', 'pan', 'zoomDyn', 'zoomPrev', '|', 'palette'],
  ['layerOff', 'layerOn', '|', 'layerThaw', 'layerFreeze', '|', 'layerLock', 'layerUnlock', '|', 'layerHide', 'layerShow', '|', 'check', 'layerMerge', 'layerCheck', '|', 'layerDelete', 'layerUndo', '|', 'layerZoom'],
  [],
  ['cubeHand', 'cubeA', 'cubeB', 'axisGrey', 'cubeSave', 'cubeX'],
]
const styleGroups = [
  ['textStyle', 'dimStyle', 'multiStyle', 'tableStyle'],
  ['note', 'smallNote', 'noteBrush'],
]
const leftColumns = [
  ['line', 'ray', 'hexagon', 'rect', 'arc3', 'arc', 'circle', 'ellipse', 'ellArc', 'points', 'spline', 'hatch', 'textAdd', 'region', 'note', 'smallNote', 'cloudEdit', 'cloudRect', 'cloudRound', 'cloudFree'],
  ['snapCorner', 'snapSegment', '|', 'snapNone', 'snapCross', 'snapEnd', 'snapPerpMid', 'snapMid', '|', 'snapCentre', 'snapQuad', 'snapTangent', '|', 'snapInsert', 'snapNode', 'snapParallel', 'snapPerp', '|', 'snapNear', 'snapOff', '|', 'snapHand'],
]
const rightColumn = ['eraser', 'dedupe', 'copyEnt', 'mirror', 'move', 'offset', 'pattern', 'rotate', 'scale', 'stretch', 'transform', 'chamfer', 'fillet', 'breakOne', 'breakTwo', 'weld', 'extend', 'trim', 'powerTrim', 'splitPoint', 'hatchEdit', 'order', 'pedit', 'explode']
const pickers = ['selectArea', 'pointer', 'pickMatch', 'pickQuick', 'help']
const bottomTools = ['image', 'reference', 'attribute', 'attrHand', 'attrSave']

const sections = [
  {
    title: 'Ogólne',
    rows: [
      { icon: 'hyperlink', type: 'text', value: '' },
      { icon: 'lineColor', type: 'select', value: 'ByLayer', lead: 'circle' },
      { icon: 'transparency', type: 'text', value: 'ByLayer' },
      { icon: 'lineScale', type: 'text', value: '1' },
      { icon: 'lineStyle', type: 'select', value: 'ByLayer\u00a0\u00a0\u00a0\u00a0\u00a0 Solid line' },
      { icon: 'lineWeight', type: 'select', value: 'ByLayer', lead: 'line' },
      { icon: 'layer', type: 'select', value: '0' },
    ],
  },
  {
    title: 'Styl drukowania',
    rows: [
      { icon: 'plotStyle', type: 'select', value: 'monochrome.ctb' },
      { icon: 'plotTable', type: 'select', value: '', off: true },
      { icon: 'plotNone', type: 'read', value: 'Brak' },
    ],
  },
  {
    title: 'Widok',
    rows: [
      { icon: 'width', type: 'read', value: '849.056' },
      { icon: 'height', type: 'read', value: '377.119' },
      { icon: 'centreX', type: 'read', value: '278.025' },
      { icon: 'centreY', type: 'read', value: '111.772' },
      { icon: 'centreZ', type: 'read', value: '0' },
    ],
  },
  {
    title: 'Różne',
    rows: [
      { icon: 'ucs', type: 'select', value: 'Tak' },
      { icon: 'ucsOrigin', type: 'select', value: 'Tak' },
      { icon: 'ucsView', type: 'select', value: 'Tak' },
      { icon: 'annotation', type: 'select', value: '1:1' },
      { icon: 'noteHand', type: 'read', value: '' },
    ],
  },
]

const sheetTabs = [
  { name: 'Model', width: 52, active: true },
  { name: 'Sheet1', width: 58 },
  { name: 'Sheet2', width: 58 },
]
</script>

<style>
body {
  margin: 0;
  background: #f0f0f0;
}
</style>

<style scoped>
.app {
  display: flex;
  flex-direction: column;
  min-height: 100vh;
  background: #f0f0f0;
  color: #000;
  font-family: "Noto Sans", "Open Sans", sans-serif;
  font-size: 11px;
  line-height: 16px;
}

.app * {
  box-sizing: border-box;
}

button,
select,
input {
  margin: 0;
  padding: 0;
  border: 0;
  background: none;
  color: inherit;
  font: inherit;
}

.icon {
  display: block;
  width: 16px;
  height: 16px;
  overflow: visible;
}

/* title */
.top {
  display: flex;
  height: 54px;
  border-bottom: 1px solid #8e8f92;
  background: linear-gradient(#f0f1f3, #e2e4e8);
}

.logo {
  display: flex;
  width: 47px;
  padding: 8px 0 0 1px;
}

.top-rows {
  flex: 1;
  display: flex;
  flex-direction: column;
}

.title-row {
  display: flex;
  height: 28px;
}

.combo {
  display: flex;
  align-items: center;
  height: 20px;
  border: 1px solid #9c9c9c;
  background: #fff;
}

.combo select {
  flex: 1;
  min-width: 0;
  height: 100%;
  padding: 1px 0 0 1px;
  appearance: none;
  outline: 0;
}

.combo,
.row input,
.options-body,
.doc-tab {
  font-family: Roboto, "Noto Sans", sans-serif;
}

.drop {
  flex: none;
  display: flex;
  align-items: center;
  justify-content: center;
  width: 16px;
  height: 100%;
  border: 1px solid #b0b0b0;
  background: linear-gradient(#f4f4f4, #e0e0e0);
}

.drop svg {
  width: 10px;
  height: 10px;
}

.workspace-combo {
  width: 159px;
  margin-top: 3px;
  font-family: "Noto Sans", sans-serif;
}

.quick {
  display: flex;
  align-items: center;
  gap: 7px;
  margin: 0 0 2px 4px;
}

.quick-btn {
  width: 16px;
}

.more {
  display: flex;
  width: 7px;
}

.title {
  flex: 1;
  margin: 0;
  padding-left: 77px;
  text-align: center;
  font-size: 14px;
  font-weight: 400;
  line-height: 27px;
}

.window-buttons {
  position: relative;
  display: flex;
  width: 443px;
  justify-content: flex-end;
}

.window-buttons button {
  display: flex;
  align-items: center;
  justify-content: center;
  width: 36px;
  height: 22px;
}

.window-buttons button svg {
  width: 12px;
  height: 12px;
}

.window-buttons .hot {
  background: #d5e6f5;
}

.tooltip {
  position: absolute;
  top: 25px;
  right: 0;
  z-index: 2;
  padding: 6px 8px;
  border: 1px solid #000;
  background: #ffffe1;
}

.menu {
  display: flex;
  align-items: center;
  gap: 18px;
  height: 25px;
  padding: 6px 0 0 7px;
}

.menu a {
  color: #000;
  text-decoration: none;
}

/* toolbars */
.toolbar {
  display: flex;
  height: 30px;
  border-top: 1px solid #fafafa;
  border-bottom: 1px solid #9a9b9d;
}

.tool-group {
  display: flex;
  align-items: center;
  padding-right: 1px;
  border-right: 1px solid #8e8f92;
}

.tool-group:last-child {
  border-right: 0;
}

.line-group {
  padding-right: 0;
}

.grip {
  width: 3px;
  height: 26px;
  margin: 0 3px 0 4px;
  background: repeating-linear-gradient(#b8b8b8 0 2px, transparent 2px 4px);
}

.tool {
  display: flex;
  justify-content: center;
  width: 27px;
}

.sep {
  width: 1px;
  height: 22px;
  margin: 0 2px 0 3px;
  background: #8e8f92;
}

.layer-combo {
  width: 300px;
}

.layer-state {
  flex: none;
  width: 66px;
  height: 16px;
  margin: 0 15px 0 5px;
  overflow: visible;
}

.line-combo {
  width: 117px;
}

.lead {
  flex: none;
  width: 16px;
  height: 16px;
  margin: 0 1px 0 3px;
}

.lead-line {
  flex: none;
  width: 34px;
  height: 16px;
  margin-left: 2px;
}

/* vertical toolbars */
.workspace {
  position: relative;
  flex: 1;
  display: flex;
}

.side {
  display: flex;
  flex-direction: column;
  align-items: center;
  width: 31px;
  border-right: 1px solid #9a9b9d;
  border-bottom: 1px solid #9a9b9d;
}

.side-right {
  border: 0;
  padding-right: 1px;
}

.side-grip {
  width: 27px;
  height: 3px;
  margin: 4px 0 3px;
  background: repeating-linear-gradient(90deg, #b8b8b8 0 2px, transparent 2px 4px);
}

.side-tool {
  display: flex;
  align-items: center;
  height: 26px;
}

.side-sep {
  width: 23px;
  height: 1px;
  margin: 2px 0 3px;
  background: #8e8f92;
}

.arrows-left {
  position: absolute;
  top: 490px;
  left: 0;
  pointer-events: none;
  overflow: visible;
}

/* panels */
.center {
  flex: 1;
  min-width: 0;
  display: flex;
  flex-direction: column;
  padding-top: 1px;
}

.panel-head {
  display: flex;
  align-items: center;
  justify-content: space-between;
  height: 22px;
  padding: 0 6px 0 3px;
  border: 1px solid #8b90a5;
  background: #dfe3ff;
}

.panel-head h2 {
  margin: 0;
  font-size: 11px;
  font-weight: 700;
}

.close {
  display: flex;
}

.close svg {
  width: 10px;
  height: 10px;
}

.options-body {
  display: flex;
  align-items: center;
  justify-content: space-between;
  height: 27px;
  padding: 0 7px 2px 9px;
}

.help {
  display: flex;
}

.help svg {
  width: 14px;
  height: 15px;
}

.middle {
  flex: 1;
  display: flex;
}

.properties {
  display: flex;
  flex-direction: column;
  width: 249px;
  padding: 1px 2px 13px 0;
}

.properties-body {
  flex: 1;
  display: flex;
  flex-direction: column;
  padding: 11px 11px 0;
}

.pickers {
  display: flex;
  gap: 8px;
  padding: 7px 0 7px 1px;
}

.pickers button {
  display: flex;
  align-items: center;
  justify-content: center;
  width: 21px;
  height: 20px;
  border: 1px solid #a8a8a8;
}

.sheet {
  flex: 1;
  padding: 9px 26px 0 9px;
  border: 1px solid #84868f;
}

.group-head {
  display: flex;
  align-items: center;
  justify-content: space-between;
  width: 100%;
  height: 20px;
  padding: 0 5px 0 4px;
  border: 1px solid #7f8499;
  background: #dfe3ff;
  font-weight: 700;
}

.rows {
  padding-top: 4px;
}

.row {
  display: flex;
  height: 20px;
}

.row label {
  display: flex;
  align-items: center;
  justify-content: center;
  width: 40px;
}

.row .combo,
.row input {
  flex: 1;
  min-width: 0;
  border: 1px solid #9c9c9c;
  background: #fff;
}

.row input {
  padding: 1px 2px 0;
  outline: 0;
}

.row input:read-only {
  background: #b1cdea;
}

.row .off {
  border-color: #b1cdea;
  background: #f0f0f0;
}

.off .drop {
  border-color: #ddd;
  background: #f0f0f0;
  opacity: .4;
}

/* document */
.document {
  flex: 1;
  min-width: 0;
  display: flex;
  flex-direction: column;
  border-left: 2px solid #6f7073;
  padding-bottom: 3px;
}

.doc-tabs {
  display: flex;
  height: 30px;
  border-top: 1px solid #8e8f92;
  border-right: 2px solid #87888f;
  border-bottom: 2px solid #87888f;
  background: linear-gradient(#eeeef3 22px, #8e8f92 22px 23px, #fff 23px);
}

.doc-tab {
  display: flex;
  align-items: center;
  justify-content: space-between;
  width: 198px;
  padding: 0 14px 2px 34px;
  background: #fff;
}

.doc-tab button {
  display: flex;
}

.doc-tab svg {
  width: 10px;
  height: 10px;
}

.add-tab {
  display: flex;
  align-items: center;
  justify-content: center;
  width: 28px;
  height: 23px;
  border: 1px solid #a0a0a0;
  background: #e9e9e9;
}

.add-tab svg {
  width: 13px;
  height: 13px;
}

.canvas {
  position: relative;
  flex: 1;
  background: #fff;
}

.cursor {
  position: absolute;
  top: -1px;
  left: 99px;
}

.arrow-right {
  position: absolute;
  top: 22px;
  right: 36px;
}

.sheet-tabs {
  display: flex;
  height: 15px;
}

.sheet-tabs button {
  position: relative;
  display: flex;
  justify-content: center;
}

.sheet-tabs svg {
  display: block;
  overflow: visible;
}

.sheet-tabs span {
  position: absolute;
  inset: 0;
  line-height: 15px;
}

/* command window */
.command {
  padding-top: 1px;
  border-top: 2px solid #7b7c80;
}

.history {
  display: flex;
  align-items: center;
  justify-content: space-between;
  height: 28px;
  padding-left: 4px;
  border: 1px solid #7b7c80;
  background: #fff;
}

.history p {
  margin: 0;
  padding-top: 2px;
  font-family: "Liberation Sans", Arial, sans-serif;
  font-size: 13px;
}

.spin {
  display: flex;
  flex-direction: column;
  justify-content: space-between;
  width: 16px;
  height: 24px;
}

.spin button {
  display: flex;
  align-items: center;
  justify-content: center;
  height: 11px;
}

.spin svg {
  width: 8px;
  height: 5px;
}

.prompt {
  display: block;
  width: 100%;
  height: 16px;
  padding: 0 5px;
  background: #fff;
  outline: 0;
}

/* bottom */
.bottom-tools {
  display: flex;
  align-items: center;
  height: 30px;
}

.status {
  display: flex;
  align-items: center;
  height: 28px;
  padding-top: 2px;
}

.version {
  width: 35%;
  padding-left: 2px;
}

.modes {
  display: flex;
  align-items: center;
  padding-left: 3px;
}

.mode-group {
  display: flex;
  align-items: center;
  gap: 8px;
  height: 24px;
  padding: 0 2px 0 6px;
  border: 1px solid #dcdcdc;
  border-left: 0;
}

.mode-group button {
  height: 20px;
  padding: 0 5px;
  border: 1px solid #adadad;
  background: #eee;
  line-height: 16px;
}

.mode-group .on {
  border-color: #569de5;
  background: #cce4fc;
}

.mode-group .note {
  display: flex;
  align-items: center;
  gap: 12px;
  width: 91px;
}

.coords {
  padding-left: 5px;
}
</style>
